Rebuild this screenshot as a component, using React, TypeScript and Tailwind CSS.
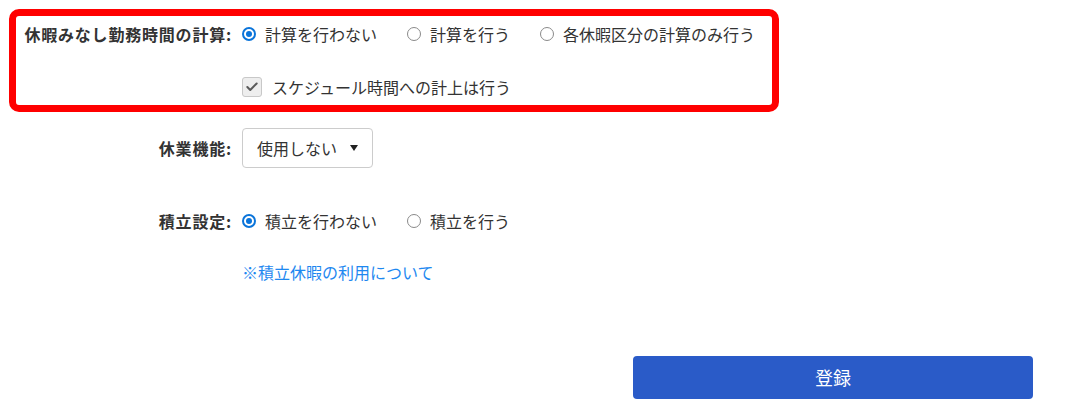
import { Check } from "lucide-react";

const font = "font-['Meiryo','Noto_Sans_CJK_JP','Noto_Sans',sans-serif]";

function Radio({ label, checked }: { label: string; checked?: boolean }) {
  return (
    <label className="flex items-center gap-[9px]">
      {checked ? (
        <span className="flex h-[14px] w-[14px] shrink-0 items-center justify-center rounded-full border-2 border-[#0a74da] bg-white">
          <span className="h-[6px] w-[6px] rounded-full bg-[#0a74da]" />
        </span>
      ) : (
        <span className="h-[14px] w-[14px] shrink-0 rounded-full border border-[#8a8a8a] bg-white" />
      )}
      <span>{label}</span>
    </label>
  );
}

function FieldLabel({ children, width }: { children: string; width: string }) {
  return <div className={`${width} shrink-0 text-right font-bold tracking-[0.8px]`}>{children}</div>;
}

export default function App() {
  return (
    <div className={`${font} min-h-[413px] bg-white pl-[9px] pt-[9px] text-[16px] text-[#333]`}>
      <div className="w-[770px] rounded-[10px] border-[7px] border-[#ff0000]">
        <div className="flex h-9 items-center">
          <FieldLabel width="w-[216px]">休暇みなし勤務時間の計算:</FieldLabel>
          <div className="ml-[10px] flex items-center gap-[30px]">
            <Radio label="計算を行わない" checked />
            <Radio label="計算を行う" />
            <Radio label="各休暇区分の計算のみ行う" />
          </div>
        </div>
        <div className="mt-[17px] flex h-9 items-center pl-[226px]">
          <span className="flex h-5 w-5 shrink-0 items-center justify-center rounded-[3px] border border-[#c8c8c8] bg-[#eeeeee]">
            <Check className="h-[14px] w-[14px] text-[#5a5a5a]" strokeWidth={3.5} />
          </span>
          <span className="ml-[10px]">スケジュール時間への計上は行う</span>
        </div>
      </div>

      <div className="mt-[16px] flex h-10 items-center">
        <FieldLabel width="w-[223px]">休業機能:</FieldLabel>
        <div className="ml-[10px] flex h-10 w-[131px] items-center justify-between rounded-[4px] border border-[#cccccc] pl-[14px] pr-[14px]">
          <span>使用しない</span>
          <span className="h-0 w-0 border-x-[4px] border-t-[6px] border-x-transparent border-t-[#222]" />
        </div>
      </div>

      <div className="mt-[35px] flex h-9 items-center">
        <FieldLabel width="w-[223px]">積立設定:</FieldLabel>
        <div className="ml-[10px] flex items-center gap-[30px]">
          <Radio label="積立を行わない" checked />
          <Radio label="積立を行う" />
        </div>
      </div>

      <div className="mt-[15px] flex h-9 items-center pl-[233px]">
        <a className="text-[#1e88f0]">※積立休暇の利用について</a>
      </div>

      <div className="mt-[66px] pl-[624px]">
        <button className="flex h-[43px] w-[400px] items-center justify-center rounded-[4px] bg-[#2a5bc8] text-[18px] text-white">
          登録
        </button>
      </div>
    </div>
  );
}
